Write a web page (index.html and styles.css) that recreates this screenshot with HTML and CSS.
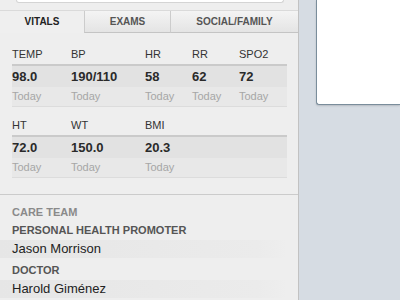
FILE: index.html
```html
<!DOCTYPE html>
<html lang="en">
<head>
    <meta charset="UTF-8">
    <meta name="viewport" content="width=device-width, initial-scale=1.0">
    <title>Patient Record</title>
    <link rel="stylesheet" href="styles.css">
</head>
<body>
    <div class="layout">
        <div class="sidebar">
            <div class="search-box"></div>

            <div class="tabs">
                <div class="tab active">VITALS</div>
                <div class="tab">EXAMS</div>
                <div class="tab wide">SOCIAL/FAMILY</div>
            </div>

            <div class="vitals">
                <div class="vital-group">
                    <div class="vital-row labels">
                        <span>TEMP</span><span>BP</span><span>HR</span><span>RR</span><span>SPO2</span>
                    </div>
                    <div class="vital-row values">
                        <span>98.0</span><span>190/110</span><span>58</span><span>62</span><span>72</span>
                    </div>
                    <div class="vital-row dates">
                        <span>Today</span><span>Today</span><span>Today</span><span>Today</span><span>Today</span>
                    </div>
                </div>

                <div class="vital-group">
                    <div class="vital-row labels">
                        <span>HT</span><span>WT</span><span>BMI</span>
                    </div>
                    <div class="vital-row values">
                        <span>72.0</span><span>150.0</span><span>20.3</span>
                    </div>
                    <div class="vital-row dates">
                        <span>Today</span><span>Today</span><span>Today</span>
                    </div>
                </div>
            </div>

            <div class="care-team">
                <h3>CARE TEAM</h3>
                <div class="member">
                    <div class="role">PERSONAL HEALTH PROMOTER</div>
                    <div class="name">Jason Morrison</div>
                </div>
                <div class="member">
                    <div class="role">DOCTOR</div>
                    <div class="name">Harold Giménez</div>
                </div>
            </div>
        </div>

        <div class="main">
            <div class="note-box"></div>
        </div>
    </div>
</body>
</html>
```

FILE: styles.css
```css
body {
    margin: 0;
    padding: 0;
    font-family: "Liberation Sans", Arial, sans-serif;
    width: 400px;
    height: 300px;
    overflow: hidden;
}

.layout {
    display: flex;
    height: 300px;
}

.sidebar {
    width: 298px;
    flex-shrink: 0;
    background-color: #eeeeee;
    border-right: 1px solid #c2c2c2;
}

.search-box {
    height: 2px;
    margin: 0 14px 0 16px;
    background: #ffffff;
    border: 1px solid #d4d4d4;
    border-top: none;
    border-radius: 0 0 3px 3px;
}

.tabs {
    display: flex;
    margin-top: 7px;
    border-top: 1px solid #dadada;
    height: 22px;
}

.tab {
    width: 85px;
    text-align: center;
    font-size: 10px;
    font-weight: bold;
    line-height: 22px;
    color: #555;
    background: linear-gradient(#f4f4f4, #e4e4e4);
    border-left: 1px solid #cccccc;
    border-bottom: 1px solid #c4c4c4;
}

.tab.wide {
    flex: 1;
}

.tab.active {
    width: 84px;
    color: #222;
    background: #efefef;
    border-left: none;
    border-bottom: none;
}

.vitals {
    padding: 5px 11px 0 12px;
}

.vital-group + .vital-group {
    margin-top: 2px;
}

.vital-row {
    display: grid;
    grid-template-columns: 59px 74px 47px 47px 1fr;
}

.labels {
    height: 28px;
    align-items: end;
    font-size: 11px;
    line-height: 13px;
    color: #333;
    padding-bottom: 3px;
    box-sizing: border-box;
    border-bottom: 2px solid #cacaca;
}

.values {
    height: 21px;
    line-height: 21px;
    font-size: 13px;
    font-weight: bold;
    color: #2a2a2a;
    background: #e2e2e2;
}

.dates {
    height: 19px;
    line-height: 19px;
    font-size: 11px;
    color: #a6a6a6;
    background: #e8e8e8;
    border-bottom: 1px solid #dcdcdc;
}

.care-team {
    margin-top: 16px;
    border-top: 1px solid #cbcbcb;
    padding-top: 11px;
}

.care-team h3 {
    margin: 0 0 5px 12px;
    font-size: 11px;
    line-height: 13px;
    color: #8a8a8a;
}

.role {
    margin-left: 12px;
    font-size: 11px;
    font-weight: bold;
    line-height: 13px;
    color: #555;
}

.name {
    margin: 3px 11px 6px 0;
    padding-left: 12px;
    height: 18px;
    line-height: 18px;
    font-size: 13px;
    color: #222;
    background: linear-gradient(90deg, #e6e6e6, #ebebeb 90%, #eeeeee);
}

.main {
    flex: 1;
    background-color: #d6dce3;
}

.note-box {
    margin-left: 17px;
    height: 104px;
    background: #ffffff;
    border: 1px solid #7a8d9b;
    border-top: none;
    border-right: none;
    border-radius: 0 0 0 3px;
    box-shadow: 0 1px 2px rgba(0, 0, 0, 0.15);
}
```
